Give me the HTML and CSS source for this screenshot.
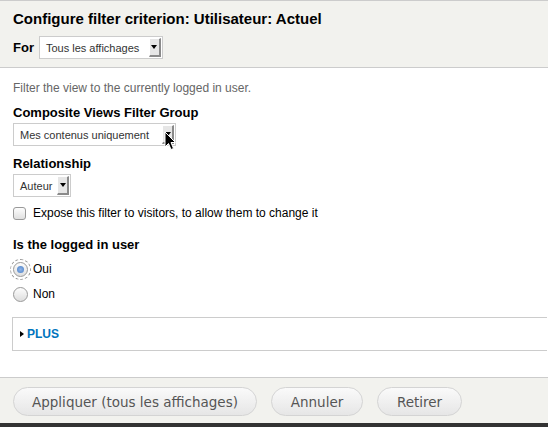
FILE: index.html
```html
<!DOCTYPE html>
<html>
<head>
    <meta charset="utf-8">
    <title>Configure filter criterion</title>
    <link rel="stylesheet" href="styles.css">
</head>
<body>
    <div class="dialog">
        <header class="dialog-head">
            <h1>Configure filter criterion: Utilisateur: Actuel</h1>
            <div class="for-row">
                <label class="for-label">For</label>
                <div class="select select-for">
                    <span class="select-value">Tous les affichages</span>
                    <span class="select-arrow"></span>
                </div>
            </div>
        </header>

        <main class="dialog-body">
            <p class="description">Filter the view to the currently logged in user.</p>

            <label class="form-label">Composite Views Filter Group</label>
            <div class="select select-group">
                <span class="select-value">Mes contenus uniquement</span>
                <span class="select-arrow"></span>
                <!-- mouse pointer sitting on the arrow -->
                <svg class="pointer" width="13" height="20" viewBox="0 0 13 20">
                    <path d="M1 1 L1 16 L4.5 12.5 L7 18.5 L9.5 17.5 L7 11.5 L11.5 11.5 Z" fill="#000" stroke="#fff" stroke-width="1"/>
                </svg>
            </div>

            <label class="form-label label-rel">Relationship</label>
            <div class="select select-rel">
                <span class="select-value">Auteur</span>
                <span class="select-arrow"></span>
            </div>

            <div class="checkbox-row">
                <span class="checkbox"></span>
                <span>Expose this filter to visitors, to allow them to change it</span>
            </div>

            <label class="form-label label-user">Is the logged in user</label>
            <div class="radio-row">
                <span class="radio checked focused"></span>
                <span>Oui</span>
            </div>
            <div class="radio-row">
                <span class="radio"></span>
                <span>Non</span>
            </div>

            <div class="more">
                <span class="triangle"></span>
                <a class="more-link">PLUS</a>
            </div>
        </main>

        <footer class="dialog-foot">
            <button class="btn btn-apply">Appliquer (tous les affichages)</button>
            <button class="btn btn-cancel">Annuler</button>
            <button class="btn btn-remove">Retirer</button>
        </footer>
        <div class="bottom-bar"></div>
    </div>
</body>
</html>
```
FILE: styles.css
```css
body {
    margin: 0;
    padding: 0;
    background-color: #fff;
    font-family: "Liberation Sans", Arial, sans-serif;
    font-size: 13px;
    color: #000;
}

.dialog {
    width: 548px;
    height: 427px;
    display: flex;
    flex-direction: column;
    overflow: hidden;
}

.dialog-head {
    background-color: #f2f2ee;
    border-top: 1px solid #ccc;
    border-bottom: 1px solid #ccc;
    height: 66px;
    padding: 0 13px;
}

h1 {
    margin: 0;
    padding-top: 9px;
    font-size: 15px;
    line-height: 18px;
    font-weight: bold;
}

.for-row {
    display: flex;
    align-items: center;
    margin-top: 8px;
}

.for-label {
    font-weight: bold;
    font-size: 13px;
    margin-right: 5px;
}

.select {
    display: flex;
    align-items: center;
    background: #fff;
    border: 1px solid #ccc;
    height: 21px;
    box-sizing: content-box;
    font-size: 11px;
    color: #333;
    position: relative;
}

.select-value {
    flex: 1;
    padding-left: 6px;
}

.select-arrow {
    width: 12px;
    height: 19px;
    margin-right: 1px;
    background: #e6e6e6;
    border-left: 1px solid #fff;
    border-top: 1px solid #fff;
    border-right: 2px solid #8a8a8a;
    border-bottom: 2px solid #8a8a8a;
    box-sizing: border-box;
    display: flex;
    align-items: center;
    justify-content: center;
}

.select-arrow::after {
    content: "";
    border-left: 3px solid transparent;
    border-right: 3px solid transparent;
    border-top: 4px solid #000;
}

.select-for { width: 122px; }
.select-group { width: 161px; }
.select-rel { width: 56px; }

.pointer {
    position: absolute;
    left: 150px;
    top: 7px;
}

.dialog-body {
    flex: 1;
    display: flex;
    flex-direction: column;
    align-items: flex-start;
    padding: 12px 0 0 13px;
}

.description {
    margin: 0 0 9px;
    font-size: 12px;
    line-height: 16px;
    color: #666;
}

.form-label {
    display: block;
    font-weight: bold;
    font-size: 13px;
    line-height: 16px;
    margin-bottom: 2px;
}

.label-rel {
    margin-top: 10px;
}

.checkbox-row {
    display: flex;
    align-items: center;
    height: 16px;
    font-size: 12px;
    margin-top: 8px;
}

.checkbox {
    width: 11px;
    height: 11px;
    border: 1px solid #999;
    border-radius: 3px;
    background: linear-gradient(#fdfdfd, #e0e0e0);
    margin-right: 7px;
}

.label-user {
    margin-top: 16px;
    margin-bottom: 6px;
}

.radio-row {
    display: flex;
    align-items: center;
    height: 20px;
    font-size: 12px;
    margin-bottom: 5px;
}

.radio {
    width: 13px;
    height: 13px;
    border: 1px solid #999;
    border-radius: 50%;
    background: linear-gradient(#fdfdfd, #dedede);
    margin-right: 5px;
    position: relative;
}

.radio.focused {
    outline: 1px dashed #999;
    outline-offset: 2px;
}

.radio.checked::after {
    content: "";
    position: absolute;
    left: 3px;
    top: 3px;
    width: 7px;
    height: 7px;
    border-radius: 50%;
    background: radial-gradient(#8fb4e6, #4a7fc7);
}

.more {
    margin: 8px 0 0 -1px;
    border: 1px solid #ccc;
    border-right: 0;
    padding: 0 7px;
    height: 34px;
    width: 100%;
    box-sizing: border-box;
    display: flex;
    align-items: center;
}

.triangle {
    border-top: 3px solid transparent;
    border-bottom: 3px solid transparent;
    border-left: 4px solid #000;
    margin-right: 3px;
}

.more-link {
    color: #0074bd;
    font-weight: bold;
    font-size: 12px;
}

.dialog-foot {
    background-color: #f2f2ee;
    border-top: 1px solid #ccc;
    height: 45px;
    display: flex;
    align-items: center;
    padding: 0 13px;
    gap: 14px;
}

.btn {
    font-family: "DejaVu Sans", Verdana, sans-serif;
    font-size: 13.5px;
    color: #555;
    height: 29px;
    border: 1px solid #d4d4d4;
    border-radius: 15px;
    background: linear-gradient(#fafafa, #e6e6e6);
    padding: 0 10px;
    margin-top: 2px;
}

.btn-apply { width: 244px; }
.btn-cancel { width: 92px; }
.btn-remove { width: 85px; }

.bottom-bar {
    height: 4px;
    background: #333;
}
```
